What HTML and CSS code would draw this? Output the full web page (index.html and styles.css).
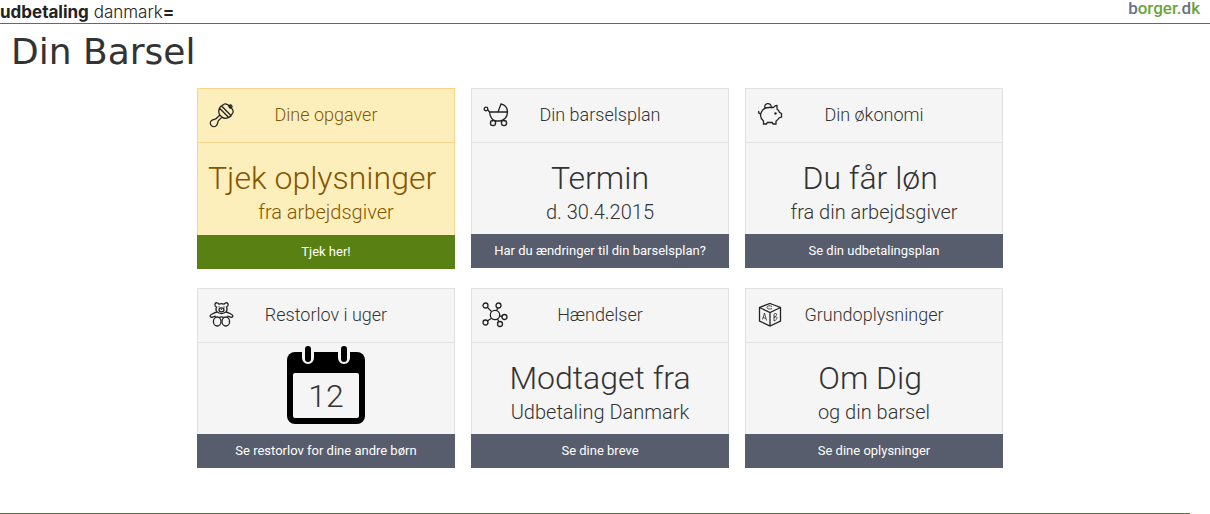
FILE: index.html
```html
<!DOCTYPE html>
<html lang="da">
<head>
<meta charset="utf-8">
<title>Din Barsel</title>
<link rel="stylesheet" href="styles.css">
</head>
<body>
<header class="top">
  <a class="brand" href="#"><strong>udbetaling</strong> danmark<b>=</b></a>
  <a class="portal" href="#"><span>b</span>orger.<span>d</span>k</a>
</header>
<h1 class="title">Din Barsel</h1>
<main class="page">
<div class="cards">
  <section class="card card-task">
    <div class="card-head">
      <svg class="icon" viewBox="0 0 28 28" aria-hidden="true"><g transform="rotate(45 14 14)"><path d="M8 4.500c1-3 11-3 12 0l1 4c0 3-2 6.500-5.500 7h-3C9 15 7 11.500 7 8.500zM7 8h14M7.500 11h13M12.500 15.500v5c0 1.500-2 2.500-2 5a3.500 3.500 0 0 0 7 0c0-2.500-2-3.500-2-5v-5"/><circle cx="14" cy="2" r="1.500"/></g></svg>
      <h2>Dine opgaver</h2>
    </div>
    <div class="card-body"><p class="big">Tjek oplysninger&nbsp;</p><p class="sub">fra arbejdsgiver</p></div>
    <a class="action" href="#">Tjek her!</a>
  </section>
  <section class="card">
    <div class="card-head">
      <svg class="icon" viewBox="0 0 28 28" aria-hidden="true"><circle cx="4" cy="8" r="1.800"/><path d="M5.500 8.500l2 2.500h18c0 5-3.500 8.500-8 9h-3c-4-.500-6.500-4-7-9M16 11l3-8c4 .500 6.500 4 6.500 8M11.500 19l-1 1.500M21.500 18.500l1 2"/><circle cx="11" cy="22" r="2.600"/><circle cx="22" cy="22" r="2.600"/></svg>
      <h2>Din barselsplan</h2>
    </div>
    <div class="card-body"><p class="big">Termin</p><p class="sub">d. 30.4.2015</p></div>
    <a class="action" href="#">Har du ændringer til din barselsplan?</a>
  </section>
  <section class="card">
    <div class="card-head">
      <svg class="icon" viewBox="0 0 28 28" aria-hidden="true"><path d="M5 12c1.500-4 5-5.500 8-5.500h4.500c1-1.500 2.500-2.200 3.500-2.200v3.700c1.500 1.200 2.200 2.200 2.500 3.500l2 1v3.500l-2.500 1c-.800 1.500-1.500 2.200-3 3.200v2.800h-3l-.700-1.500h-5l-.800 1.500h-3v-3C5 18 4 15 5 12zM5 12.500c-2 .500-3-1-2-2.500M9 7c-1.500-5 6-6.500 6.500-.500"/><circle cx="19.500" cy="12.500" r=".600"/></svg>
      <h2>Din økonomi</h2>
    </div>
    <div class="card-body"><p class="big">Du får løn&nbsp;</p><p class="sub">fra din arbejdsgiver</p></div>
    <a class="action" href="#">Se din udbetalingsplan</a>
  </section>
  <section class="card">
    <div class="card-head">
      <svg class="icon" viewBox="0 0 28 28" aria-hidden="true"><path d="M8.500 6C6 5 6.500 1.500 9 1.800c1 .100 1.600.700 2 1.400 1.500-.700 3.500-.700 5 0 .400-.700 1-1.300 2-1.400 2.500-.300 3 3.200.500 4.200 1 2.500.500 4.500-1.500 5.500-2 1.200-5 1.200-7 0C8 10.500 7.500 8.500 8.500 6zM9 11c-2 .200-3.500 1.500-5.500 2.500-2.500 1-1 3.500 1 2.700L8 15M18 11c2 .200 3.500 1.500 5.500 2.500 2.500 1 1 3.500-1 2.700L19 15M11 16.500c1.500-.800 3.500-.800 5 0"/><ellipse cx="9.200" cy="20.500" rx="3.800" ry="4.500"/><ellipse cx="17.800" cy="20.500" rx="3.800" ry="4.500"/><ellipse cx="13.500" cy="8.800" rx="2.500" ry="2"/><path d="M11 5.500v1M16 5.500v1M12.800 8.200h1.400"/></svg>
      <h2>Restorlov i uger</h2>
    </div>
    <div class="card-body card-calendar">
      <svg class="calendar" viewBox="0 0 78 78" aria-hidden="true"><rect y="6" width="78" height="72" rx="8"/><path class="rings" d="M15 5v7a6 6 0 0 0 12 0V5zM51 5v7a6 6 0 0 0 12 0V5z"/><rect x="18" width="6" height="16" rx="3"/><rect x="54" width="6" height="16" rx="3"/><rect class="sheet" x="6" y="27" width="66" height="45" rx="2"/></svg>
      <p class="weeks">12</p>
    </div>
    <a class="action" href="#">Se restorlov for dine andre børn</a>
  </section>
  <section class="card">
    <div class="card-head">
      <svg class="icon" viewBox="0 0 28 28" aria-hidden="true"><circle cx="13" cy="14" r="4.700"/><circle cx="3.500" cy="4.500" r="2.500"/><circle cx="16.500" cy="4.500" r="2.500"/><circle cx="22.500" cy="16" r="2.500"/><circle cx="3.500" cy="21.500" r="2.500"/><circle cx="18" cy="23" r="2.500"/><path d="M5.300 6.300l4.300 4.300M15.700 7l-1 2.500M17.500 14.800l2.500.700M9.500 17.200l-4.200 2.800M15.500 18l1.400 2.800"/></svg>
      <h2>Hændelser</h2>
    </div>
    <div class="card-body"><p class="big">Modtaget fra</p><p class="sub">Udbetaling Danmark</p></div>
    <a class="action" href="#">Se dine breve</a>
  </section>
  <section class="card">
    <div class="card-head">
      <svg class="icon" viewBox="0 0 28 28" aria-hidden="true"><path d="M14 2.500l10.500 4v13.500L14 25 3.500 20V6.500zM3.500 6.500L14 11.500l10.500-5M14 11.500V25"/><path class="thin" d="M6.500 18.500l2-6.500 2 7.500M7.200 16.500l2.700 1M18 13v7M18 13c3.500-2 3.500 2 0 3.300 4-1.500 4 2.200 0 3.700M16 5.500c-2-1.300-5-.500-5 1s3 2 5 1"/></svg>
      <h2>Grundoplysninger</h2>
    </div>
    <div class="card-body"><p class="big">Om Dig&nbsp;</p><p class="sub">og din barsel</p></div>
    <a class="action" href="#">Se dine oplysninger</a>
  </section>
</div>
</main>
<footer class="bottom"></footer>
</body>
</html>
```
FILE: styles.css
```css
* { box-sizing: border-box; }
body {
  margin: 0;
  background: #fff;
  color: #333;
  font-family: Roboto, "Liberation Sans", sans-serif;
}
h1, h2, p { margin: 0; font-weight: 300; }
a { text-decoration: none; }

.top {
  display: flex;
  justify-content: space-between;
  height: 24px;
  padding-right: 10px;
  border-bottom: 1px solid #5a7d16;
}
.brand {
  color: #222;
  font: 300 17px/24px Inter, sans-serif;
}
.brand strong, .brand b { font-weight: 700; }
.portal {
  color: #6ba539;
  font: 500 17px/16px Roboto, sans-serif;
}
.portal span { color: #68708a; }

.title {
  padding: 4px 11px 0;
  font: 400 36px/48px "DejaVu Sans", sans-serif;
}

.page { padding: 12px 10px 0 0; }
.cards {
  display: grid;
  grid-template-columns: repeat(3, 1fr);
  gap: 20px 16px;
  max-width: 806px;
  margin: 0 auto;
}
.card {
  display: flex;
  flex-direction: column;
  min-height: 180px;
  background: #f5f5f5;
  border: 1px solid #e1e1e1;
  border-bottom: 0;
}
.card-head {
  display: grid;
  grid-template-columns: 28px 1fr 28px;
  align-items: center;
  height: 54px;
  padding: 0 10px 2px;
  border-bottom: 1px solid #e1e1e1;
}
.card-head h2 {
  font-size: 18px;
  line-height: 24px;
  text-align: center;
  white-space: nowrap;
}
.icon {
  width: 28px;
  height: 28px;
  fill: none;
  stroke: #222;
  stroke-width: 1.3;
  overflow: visible;
}
.icon .thin { stroke-width: 0.8; }
.card-body {
  flex: 1;
  padding-top: 15px;
  text-align: center;
  white-space: nowrap;
}
.big { font-size: 32px; line-height: 40px; }
.sub { font-size: 20px; line-height: 28px; }
.action {
  margin: 0 -1px;
  background: #575d6d;
  color: #fff;
  font-size: 13px;
  line-height: 34px;
  text-align: center;
}

.card-task {
  margin-bottom: -1px;
  background: #fcefbb;
  border-color: #fad48b;
  color: #855600;
}
.card-task .card-head { border-color: #fad48b; }
.card-task .action { background: #588012; }

.card-calendar {
  display: grid;
  justify-items: center;
  align-items: start;
  padding-top: 3px;
}
.calendar, .weeks { grid-area: 1 / 1; }
.calendar { width: 78px; height: 78px; }
.calendar .rings, .calendar .sheet { fill: #f5f5f5; }
.weeks { padding-top: 30px; font-size: 32px; line-height: 40px; }

.bottom {
  margin: 45px 20px 0 0;
  border-top: 1px solid #5a7d16;
}
```
